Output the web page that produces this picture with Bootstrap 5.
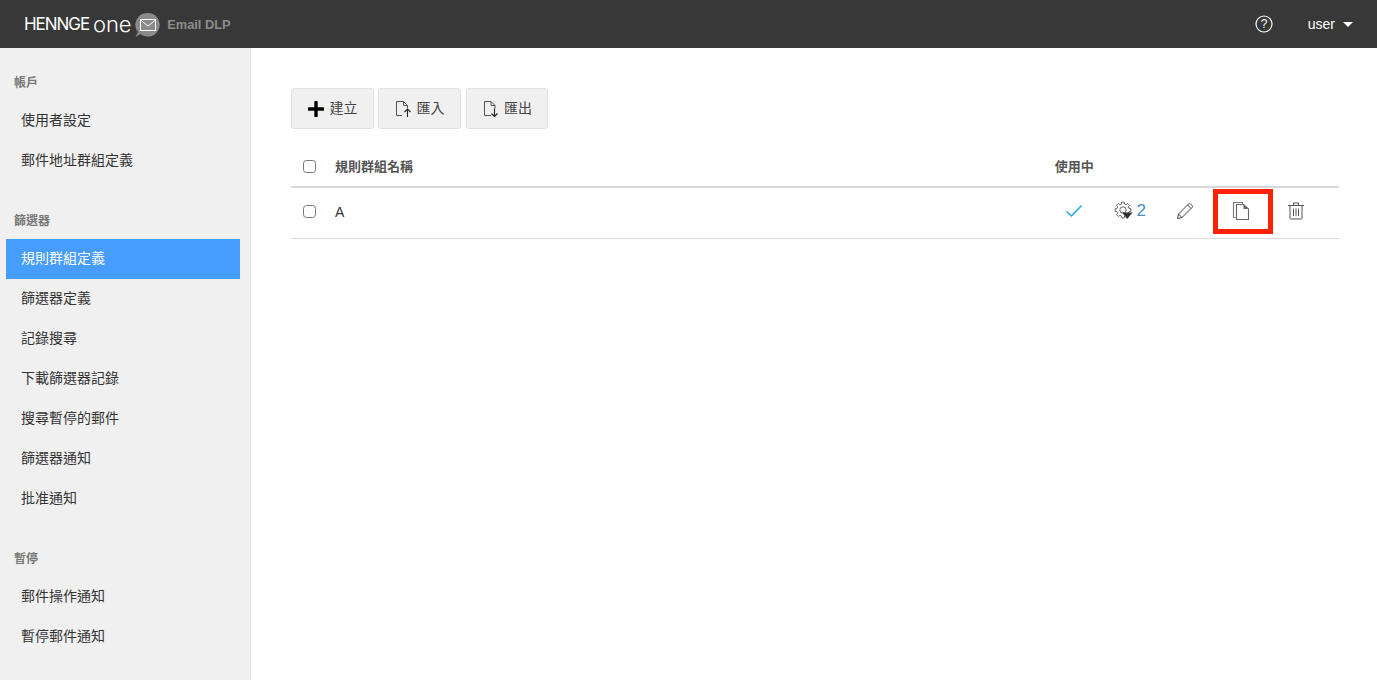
<!DOCTYPE html>
<html lang="zh-Hant">
<head>
<meta charset="utf-8">
<title>Email DLP</title>
<link href="https://cdn.jsdelivr.net/npm/bootstrap@5.3.0/dist/css/bootstrap.min.css" rel="stylesheet">
<style>
html,body{height:100%;}
body{font-family:"Liberation Sans","Noto Sans CJK TC",sans-serif;color:#333;font-size:14px;overflow:hidden;background:#fff;}
.top-bar{height:48px;background:#383838;padding:0 24px 0 24px;}
.brand-word{font-family:"Inter","Liberation Sans",sans-serif;color:#fff;font-size:17px;font-weight:400;letter-spacing:-1.05px;line-height:49px;}
.brand-one{font-size:22px;font-weight:300;letter-spacing:-.2px;margin-left:4px;line-height:47px;}
.brand-icon{margin:1px 7px 0 3px;}
.brand-product{color:#8c8c8c;font-size:12.8px;font-weight:700;letter-spacing:0;margin-top:2px;}
.user-name{color:#fff;font-size:14px;margin-left:35px;}
.user-caret{width:0;height:0;border-left:5px solid transparent;border-right:5px solid transparent;border-top:5px solid #fff;margin-left:8px;}
.shell{height:calc(100% - 48px);}
.side-panel{width:251px;flex:none;background:#f0f0f0;border-right:1px solid #e4e4e4;padding:26px 10px 0 6px;}
.side-head{height:18px;line-height:18px;margin:0 0 8px 8px;font-size:12px;font-weight:700;color:#777;}
.side-group{margin-bottom:32.5px;}
.side-group + .side-group .side-head{line-height:16px;}
.side-link{display:block;height:40px;line-height:40px;padding-left:15px;font-size:14px;color:#333;text-decoration:none;}
.side-group + .side-group .side-link{line-height:38px;}
.side-link.on{background:#469dfe;color:#fff;}
.main-area{padding:40px 38px 0 40px;}
.tool-btn{height:41px;background:#f0f0f0;border:1px solid #e2e2e2;border-radius:3px;color:#444;font-size:14px;padding:0;display:inline-flex;align-items:center;justify-content:center;}
.tool-a{width:83px;}.tool-b{width:83px;}.tool-c{width:82px;margin-left:1px;}
.tool-row{gap:4px;margin-bottom:19px;}
.plus-icon{margin-right:6px;}
.rule-table{table-layout:fixed;width:100%;margin:0;}
.rule-table th,.rule-table td{padding:0;vertical-align:middle;background:transparent;}
.rule-table th{height:39px;font-size:13px;font-weight:700;color:#555;border-bottom:2px solid #d9d9d9;}
.rule-table td{height:51px;border-bottom:1px solid #d9d9d9;font-size:14px;color:#333;}
.col-box{width:44px;}
.col-act{width:55.5px;}
.col-end{width:15px;}
.tick{width:13px;height:13px;margin:-2px 0 0 12px;display:block;border:1px solid #777;border-radius:2px;}
.num-blue{color:#4a8bc2;font-size:17px;font-weight:400;}
.gear-icon{margin-right:4px;}
.act-wrap{display:flex;align-items:center;justify-content:center;margin-top:-4px;}
.copy-wrap{margin-left:1px;}
.mark-box{position:absolute;left:0;top:1px;width:60px;height:45px;border:5px solid #ff2200;}
</style>
</head>
<body>
<nav class="top-bar d-flex align-items-center">
  <span class="brand-word">HENNGE</span><span class="brand-word brand-one">one</span>
  <svg class="brand-icon" width="26" height="26" viewBox="0 0 26 26"><path d="M14 1a11.800 11.800 0 1 1-7.500 21L1.500 25l2.400-5A11.800 11.800 0 0 1 14 1z" fill="#8a8a8a"/><rect x="6.500" y="7.500" width="15" height="11" fill="none" stroke="#fff" stroke-width="1"/><path d="M6.500 8l7.500 6 7.500-6" fill="none" stroke="#fff" stroke-width="1"/></svg>
  <span class="brand-product">Email DLP</span>
  <span class="ms-auto d-flex align-items-center">
    <svg width="18" height="18" viewBox="0 0 18 18"><circle cx="9" cy="9" r="8" fill="none" stroke="#fff" stroke-width="1.200"/><text x="9" y="13.200" text-anchor="middle" fill="#fff" font-size="12" font-family="Liberation Sans">?</text></svg>
    <span class="user-name">user</span><span class="user-caret"></span>
  </span>
</nav>
<div class="shell d-flex">
  <aside class="side-panel">
    <div class="side-group">
      <div class="side-head">帳戶</div>
      <a class="side-link" href="#">使用者設定</a>
      <a class="side-link" href="#">郵件地址群組定義</a>
    </div>
    <div class="side-group">
      <div class="side-head">篩選器</div>
      <a class="side-link on" href="#">規則群組定義</a>
      <a class="side-link" href="#">篩選器定義</a>
      <a class="side-link" href="#">記錄搜尋</a>
      <a class="side-link" href="#">下載篩選器記錄</a>
      <a class="side-link" href="#">搜尋暫停的郵件</a>
      <a class="side-link" href="#">篩選器通知</a>
      <a class="side-link" href="#">批准通知</a>
    </div>
    <div class="side-group">
      <div class="side-head">暫停</div>
      <a class="side-link" href="#">郵件操作通知</a>
      <a class="side-link" href="#">暫停郵件通知</a>
    </div>
  </aside>
  <main class="main-area flex-grow-1">
    <div class="tool-row d-flex">
      <button class="btn tool-btn tool-a" type="button">
        <svg class="plus-icon" width="16" height="16" viewBox="0 0 16 16"><path d="M8 1v14M1 8h14" stroke="#000" stroke-width="3.400" stroke-linecap="round"/></svg>建立
      </button>
      <button class="btn tool-btn tool-b" type="button">
        <svg class="me-1" width="18" height="18" viewBox="0 0 18 18"><path d="M7 15.500H1.500V1.500H8.500l4 4v2.500M8.500 1.500v4h4" fill="none" stroke="#555" stroke-width="1"/><path d="M12.500 17V9.500M9.500 12l3-3 3 3" fill="none" stroke="#222" stroke-width="1.100"/></svg>匯入
      </button>
      <button class="btn tool-btn tool-c" type="button">
        <svg class="me-1" width="18" height="18" viewBox="0 0 18 18"><path d="M9 15.500H2.500V1.500H9l4 4v3M9 1.500v4h4" fill="none" stroke="#555" stroke-width="1"/><path d="M12.500 8.500V16M9.500 13.500l3 3 3-3" fill="none" stroke="#222" stroke-width="1.100"/></svg>匯出
      </button>
    </div>
    <table class="table rule-table">
      <colgroup><col class="col-box"><col><col class="col-act"><col class="col-act"><col class="col-act"><col class="col-act"><col class="col-act"><col class="col-end"></colgroup>
      <thead>
        <tr>
          <th><input class="form-check-input tick" type="checkbox" aria-label="全選"></th>
          <th>規則群組名稱</th>
          <th class="text-center">使用中</th>
          <th></th><th></th><th></th><th></th><th></th>
        </tr>
      </thead>
      <tbody>
        <tr>
          <td><input class="form-check-input tick" type="checkbox" aria-label="A"></td>
          <td>A</td>
          <td><div class="act-wrap"><svg width="18" height="14" viewBox="0 0 18 14"><path d="M1.500 7.500l5 4.500 10-10.500" fill="none" stroke="#1ea7ee" stroke-width="1.500"/></svg></div></td>
          <td><div class="act-wrap">
            <svg class="gear-icon" width="19" height="19" viewBox="0 0 19 19"><path d="M7.400 3L7.750 1.100H10.250L10.600 3L12.100 3.630L13.700 2.530L15.470 4.300L14.370 5.900L15 7.400L16.900 7.750V10.250L15 10.600L14.370 12.100L15.470 13.700L13.700 15.470L12.100 14.370L10.600 15L10.250 16.900H7.750L7.400 15L5.900 14.370L4.300 15.470L2.530 13.700L3.630 12.100L3 10.600L1.100 10.250V7.750L3 7.400L3.630 5.900L2.530 4.300L4.300 2.530L5.900 3.630Z" fill="#fff" stroke="#555" stroke-width=".9"/><circle cx="9" cy="9" r="3.200" fill="none" stroke="#555" stroke-width=".9"/><path d="M8 11.500h10.500l-5.250 6.500z" fill="#333"/></svg>
            <span class="num-blue">2</span></div></td>
          <td><div class="act-wrap"><svg width="18" height="18" viewBox="0 0 18 18"><path d="M1.500 16.500l1-4.500L12.500 2a1.500 1.500 0 0 1 2.100 0l1.400 1.400a1.500 1.500 0 0 1 0 2.100L6 15.500z" fill="none" stroke="#444" stroke-width="1"/><path d="M2.500 12l3.500 3.500M11.500 3l3.500 3.500" fill="none" stroke="#444" stroke-width="1"/></svg></div></td>
          <td class="position-relative"><div class="act-wrap copy-wrap"><svg width="18" height="20" viewBox="0 0 18 20"><path d="M3.500 16.500H1.500V1.500H10.500V3" fill="none" stroke="#777" stroke-width="1.100"/><path d="M4.500 3.500H11.500L16.500 8V18.500H4.500Z" fill="#fff" stroke="#666" stroke-width="1.100"/><path d="M11.500 3.500L16.500 8H11.500Z" fill="#666"/></svg></div><span class="mark-box"></span></td>
          <td><div class="act-wrap"><svg width="18" height="19" viewBox="0 0 18 19"><path d="M1 4.500h16M6.500 4.500V2h5v2.500M3 4.500V17a1 1 0 0 0 1 1h10a1 1 0 0 0 1-1V4.500M6.500 7.500v7.500M9 7.500v7.500M11.500 7.500v7.500" fill="none" stroke="#555" stroke-width="1"/></svg></div></td>
          <td></td>
        </tr>
      </tbody>
    </table>
  </main>
</div>
</body>
</html>
